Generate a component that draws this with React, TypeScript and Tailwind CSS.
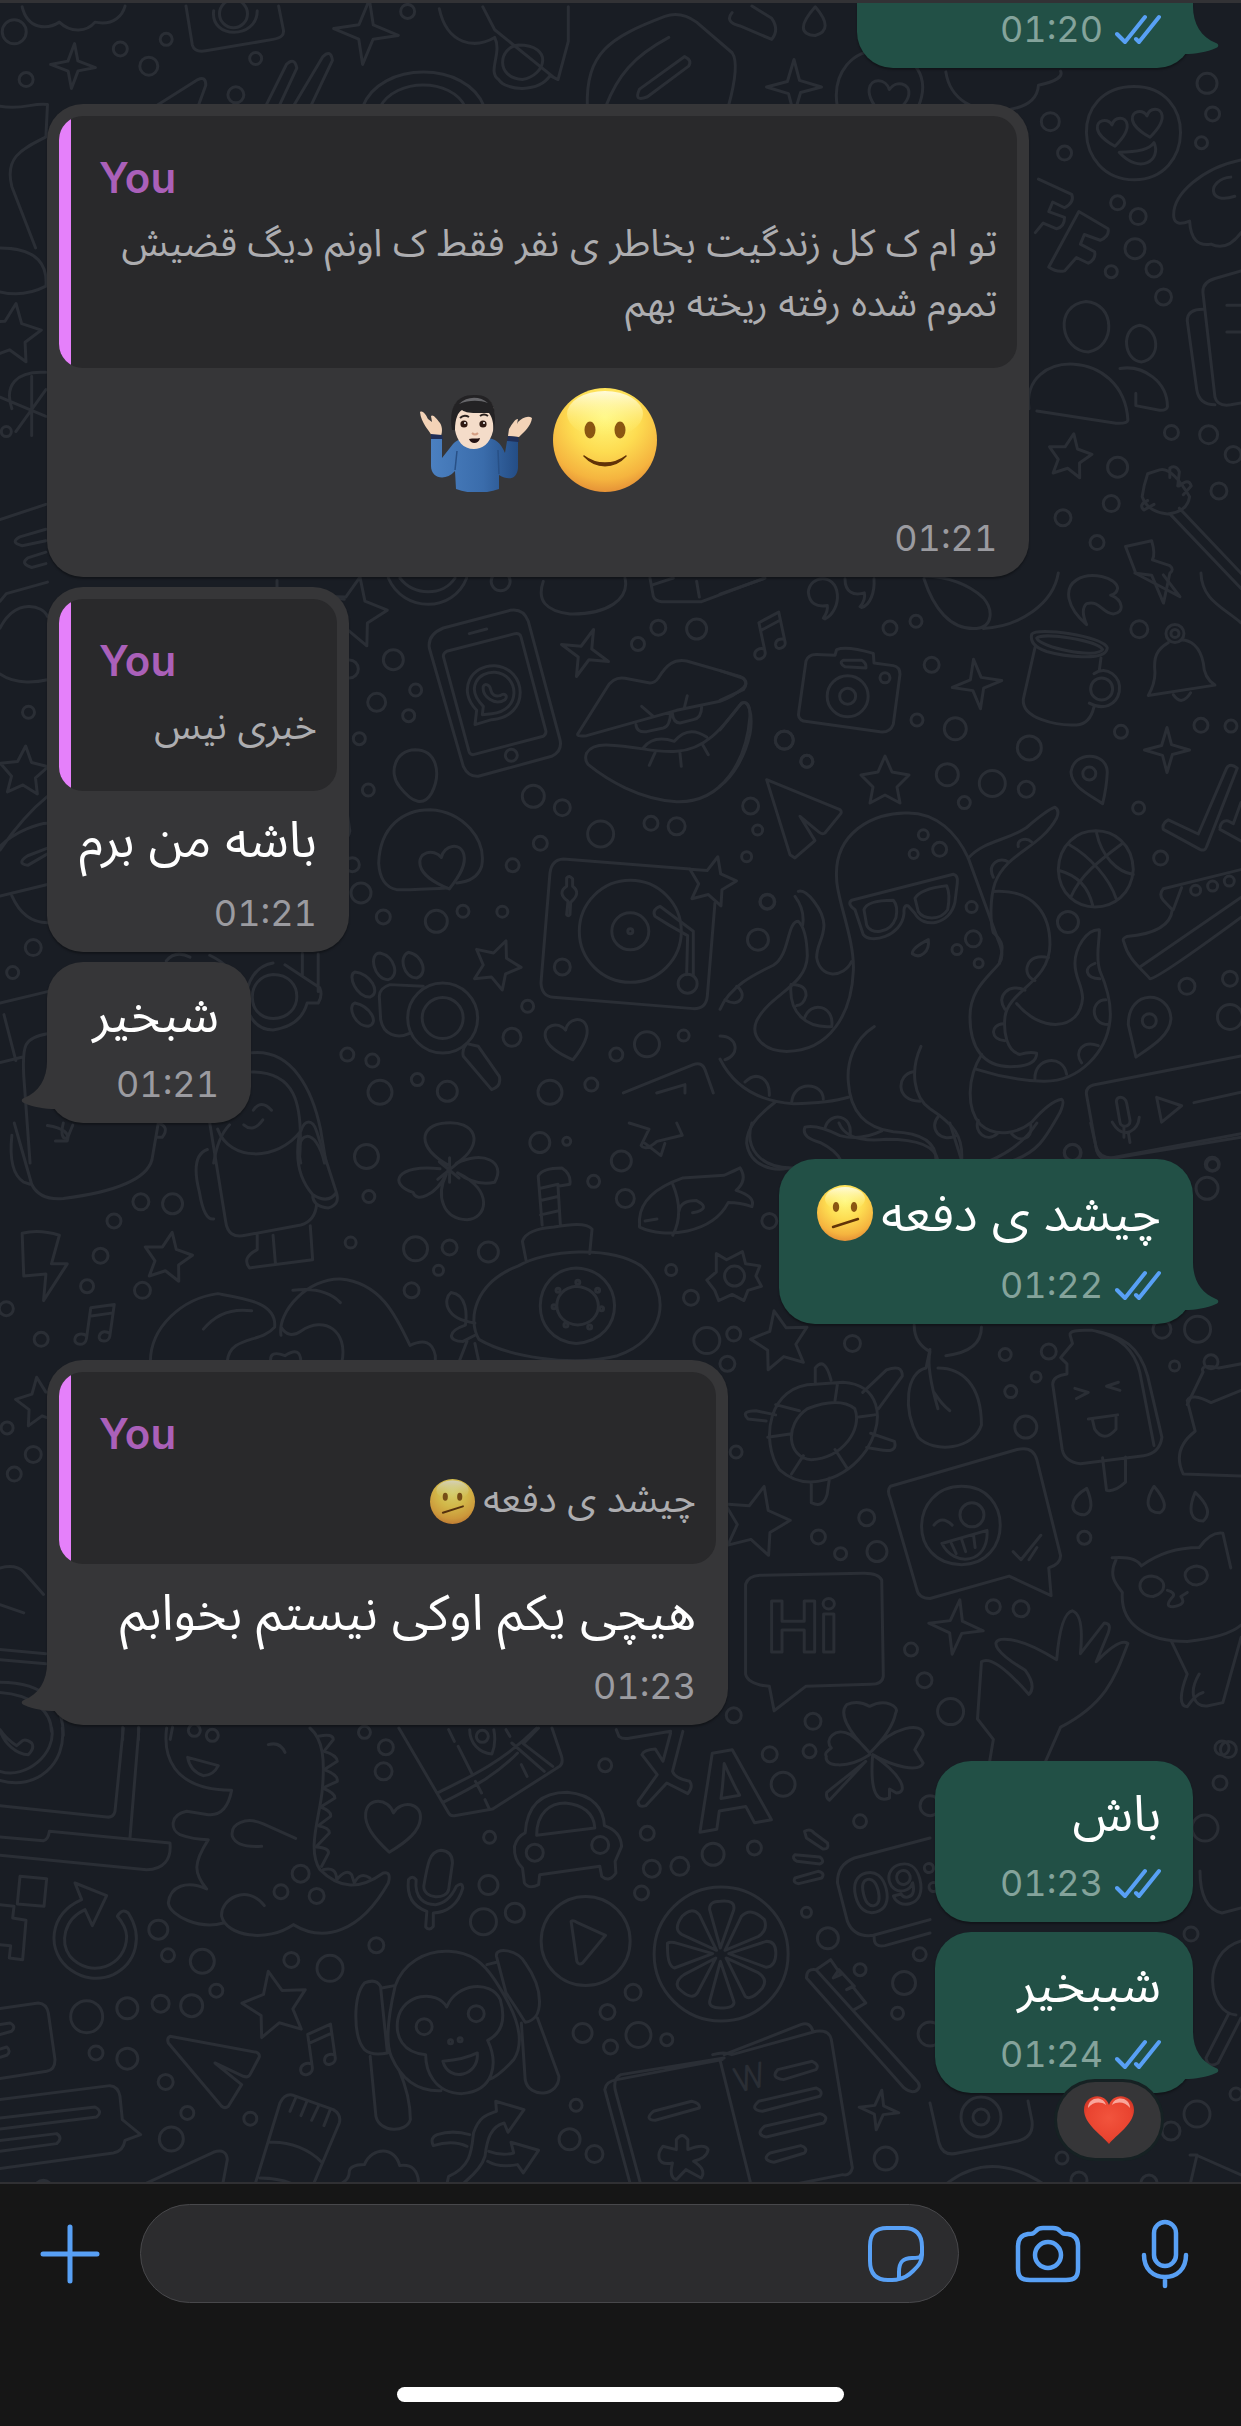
import React, { useState } from 'react';

interface Quote {
  author: string;
  text: string;
  emoji?: boolean;
}

interface Message {
  id: number;
  mine: boolean;
  time: string;
  text?: string;
  emoji?: boolean;
  bigEmoji?: boolean;
  quote?: Quote;
  tail?: boolean;
  reaction?: boolean;
  width: string;
  spacing: string;
}

const messages: Message[] = [
  {
    id: 1,
    mine: false,
    time: '01:21',
    bigEmoji: true,
    quote: {
      author: 'You',
      text: 'تو ام ک کل زندگیت بخاطر ی نفر فقط ک اونم دیگ قضیش تموم شده رفته ریخته بهم',
    },
    width: 'w-6/7',
    spacing: 'mt-9',
  },
  {
    id: 2,
    mine: false,
    time: '01:21',
    text: 'باشه من برم',
    quote: { author: 'You', text: 'خبری نیس' },
    width: 'min-w-[297px]',
    spacing: 'mt-2.5',
  },
  {
    id: 3,
    mine: false,
    time: '01:21',
    text: 'شبخیر',
    tail: true,
    width: 'min-w-[204px]',
    spacing: 'mt-2.5',
  },
  {
    id: 4,
    mine: true,
    time: '01:22',
    text: 'چیشد ی دفعه',
    emoji: true,
    tail: true,
    width: 'min-w-[414px]',
    spacing: 'mt-9',
  },
  {
    id: 5,
    mine: false,
    time: '01:23',
    text: 'هیچی یکم اوکی نیستم بخوابم',
    quote: { author: 'You', text: 'چیشد ی دفعه', emoji: true },
    tail: true,
    width: 'min-w-[681px]',
    spacing: 'mt-9',
  },
  {
    id: 6,
    mine: true,
    time: '01:23',
    text: 'باش',
    width: 'min-w-[258px]',
    spacing: 'mt-9',
  },
  {
    id: 7,
    mine: true,
    time: '01:24',
    text: 'شببخیر',
    tail: true,
    reaction: true,
    width: 'min-w-[258px]',
    spacing: 'mt-2.5',
  },
];

/* ---------- wallpaper ---------- */

type Dot = [number, number, number];
type Stamp = [number, number, number, number];

interface TileProps {
  x: number;
  y: number;
  sx: number;
  sy: number;
  paths: string[];
  dots: Dot[];
}

// paths and dots share the tile's own units, dot radii are in page units
const Tile: React.FC<TileProps> = ({ x, y, sx, sy, paths, dots }) => (
  <g transform={`translate(${x} ${y}) scale(${sx} ${sy})`}>
    {paths.map((d, i) => (
      <path key={i} d={d} />
    ))}
    {dots.map(([cx, cy, r], i) => (
      <ellipse key={i} cx={cx} cy={cy} rx={r / sx} ry={r / sy} />
    ))}
  </g>
);

const STAR = 'M0-24L7-8L24-5L12 7L15 23L0 15L-15 23L-12 7L-24-5L-7-8Z';
const SPARK = 'M0-25L5-6L25 0L6 5L0 25L-5 6L-25 0L-6-5Z';
const HEART = 'M0 24C-16 12-25 2-25-9C-25-24-6-25 0-12C6-25 25-24 25-9C25 2 16 12 0 24Z';
const NOTE =
  'M-9 16V-17L15-24V10M-9-8L15-15M-9 16C-9 24-21 25-21 18C-21 12-14 10-9 13M15 10C15 17 3 18 4 11C5 5 11 5 15 7';

const stars: Stamp[] = [
  [12, 329, 1.2, 8], [1070, 452, 0.9, 10], [24, 767, 1, 4], [353, 607, 1.4, 12],
  [497, 960, 1, 22], [712, 877, 1, 14], [885, 777, 1, 0], [168, 1253, 1, 10],
  [780, 1336, 1.2, -12], [756, 1516, 1.4, 14], [40, 1398, 1, -8], [275, 2000, 1.35, -12],
];
const sparks: Stamp[] = [
  [366, 29, 1.3, 6], [73, 63, 0.9, 4], [794, 84, 1.1, 0], [585, 650, 1, 20],
  [977, 681, 1, -8], [1167, 747, 0.9, 0], [956, 1624, 1.1, 8], [879, 2107, 0.8, 8],
];
const hearts: Stamp[] = [
  [568, 1037, 0.85, -14], [444, 865, 0.9, -14], [392, 1823, 1.1, 6], [888, 96, 0.8, 8],
  [1113, 129, 0.6, -8], [1148, 120, 0.6, -8],
];
const notes: Stamp[] = [
  [770, 633, 0.9, -12], [319, 2047, 1, -8], [97, 1322, 0.95, 8],
];

const Stamps: React.FC<{ d: string; items: Stamp[] }> = ({ d, items }) => (
  <>
    {items.map(([x, y, s, r], i) => (
      <path key={i} d={d} transform={`translate(${x} ${y}) rotate(${r}) scale(${s})`} />
    ))}
  </>
);

const tiles: TileProps[] = [
  {
    x: 0, y: 0, sx: 0.7915, sy: 0.3827,
    paths: [
      'M28 10C35 70 60 70 75 50C90 80 110 75 120 50C145 60 155 30 158 8',
      'M235 8L243 110Q246 130 260 125L345 95Q360 90 358 70L352 8M270 20C265 95 325 95 325 20',
      'M555 15C565 110 600 120 625 90C635 130 615 180 630 200C640 230 680 235 695 190L705 200L718 100V10M610 10L625 70L700 195M655 110C630 115 625 195 660 200C690 190 700 110 655 110Z',
      'M335 272L362 160Q372 140 375 170L352 272M370 272L408 140Q418 120 420 150L392 272M195 272L250 200Q260 190 260 215L250 272',
      'M458 272C480 150 590 150 612 272M480 272C500 195 570 195 588 272',
      'M742 272C740 130 770 90 840 35Q860 20 880 50L925 130Q935 160 920 272M765 272C780 190 800 140 845 90M865 140Q875 150 870 165L818 245Q800 260 808 225Z',
      'M925 25Q915 50 935 60L975 95Q985 70 975 40L950 8M1030 10Q1000 80 1030 85Q1055 70 1030 10Z',
      'M1058 272C1050 180 1080 120 1110 125C1160 130 1175 200 1160 272M1195 180C1200 250 1230 290 1270 280Q1310 270 1312 215Q1345 200 1340 178',
      'M1433 218C1350 218 1355 460 1433 462C1510 460 1512 218 1433 218ZM1414 390Q1450 390 1458 365C1468 410 1440 450 1414 390Z',
      'M1568 410C1520 430 1480 500 1483 560Q1485 585 1503 570Q1505 640 1530 630Q1550 650 1568 600M1555 455C1525 460 1525 530 1560 505',
      'M1312 460L1354 500Q1358 520 1345 535L1330 520L1325 545L1345 560Q1345 585 1335 590L1318 575L1308 600',
      'M1363 545L1400 590Q1402 610 1390 620L1370 605L1365 630L1383 650Q1385 670 1375 680L1360 665L1345 700Q1335 705 1325 690Z',
      'M1372 780C1330 790 1340 910 1375 912C1410 900 1410 785 1372 780ZM1440 842C1415 850 1420 935 1442 938C1468 930 1465 850 1440 842ZM1300 1060C1290 900 1420 900 1425 1090Q1424 1100 1410 1098L1310 1066M1415 955C1445 945 1475 990 1475 1055Q1474 1065 1465 1064L1435 1052V1020',
      'M1568 700L1535 720Q1518 730 1520 760L1535 1030Q1538 1055 1555 1050L1568 1045M1520 800Q1500 800 1500 830L1512 1010Q1515 1050 1535 1050M1550 790H1568M1550 860H1568',
      'M1450 1230Q1445 1260 1443 1290Q1450 1330 1475 1335Q1500 1330 1503 1290Q1480 1210 1465 1220ZM1490 1320L1568 1490M1478 1335L1568 1530M1478 1240V1215Q1486 1205 1490 1225L1488 1262M1490 1262Q1502 1240 1505 1262L1495 1285M1450 1300Q1438 1310 1445 1325L1458 1310',
      'M1422 1420L1455 1405Q1460 1440 1456 1455L1478 1470Q1484 1480 1478 1490L1470 1568L1455 1495L1435 1490Z',
      'M0 270C30 280 40 260 60 265L58 350C30 380 5 400 15 480L45 640M0 640C50 640 60 690 58 740Q30 770 0 755',
      'M15 1060C5 1000 20 960 58 965M40 975V1130M0 1030L58 1080M58 1010L20 1120',
      'M0 1350L58 1310M58 1375L25 1395Q12 1410 28 1418L58 1405M58 1435L35 1450Q25 1465 40 1475L58 1465',
    ],
    dots: [
      [18, 75, 12], [33, 200, 7], [152, 120, 7], [188, 165, 9], [210, 95, 6], [298, 240, 8],
      [323, 145, 6], [515, 22, 7], [295, 28, 14], [1327, 310, 9], [1345, 392, 7], [1525, 210, 10],
      [1532, 290, 7], [1518, 365, 6], [1412, 522, 7], [1438, 558, 8], [1434, 642, 10], [1404, 702, 6],
      [1458, 695, 8], [1470, 768, 8], [1480, 1122, 7], [1527, 1128, 9], [1412, 1213, 10],
      [1404, 1308, 8], [1343, 1345, 8], [1540, 1275, 8], [1386, 1410, 7], [1558, 1180, 8], [8, 1120, 5],
    ],
  },
  {
    x: 0, y: 560, sx: 0.7915, sy: 0.3827,
    paths: [
      'M0 100L8 80L60 50M350 45V70L435 95M0 170C20 90 55 110 60 140M0 290C20 320 50 310 60 305',
      'M0 750Q30 660 60 610M0 870L60 840M0 740C20 700 50 680 60 680M60 760L35 790Q20 785 35 765L60 745M15 870Q30 940 60 940M435 600L442 700Q440 720 435 722',
      'M210 1040Q222 1010 240 1030M265 1025Q300 1060 295 1110M345 1045C300 1060 300 1220 345 1220Q380 1210 388 1150L402 1150Q408 1130 404 1110L360 1050M345 1075C310 1080 310 1190 345 1190C385 1190 385 1075 345 1075ZM402 1022V1120M382 1020V1080',
      'M0 1150L60 1120M5 1180L20 1300M60 1230C30 1240 28 1260 30 1340L38 1568M0 1305L30 1290',
      'M318 1280C370 1270 395 1380 405 1480L412 1568M318 1330C370 1330 385 1400 378 1568M270 1568Q275 1500 290 1468M320 1430Q330 1400 343 1430M308 1468Q320 1490 332 1455',
      'M380 1568C370 1480 400 1470 410 1568M60 1470Q90 1480 85 1510H70',
    ],
    dots: [[36, 390, 6], [42, 1005, 8], [16, 1070, 6]],
  },
  {
    x: 340, y: 570, sx: 0.3333, sy: 0.3333,
    paths: [
      'M145 15C190 120 340 120 380 15M180 15C220 70 310 70 345 15M610 25Q580 110 690 123C800 125 870 80 855 15M930 15L940 70Q945 85 965 86H1085L1275 15M1070 25L1078 72M940 35L1000 15',
      'M310 165L510 112Q550 105 565 145L660 500Q668 535 635 550L415 610Q385 612 370 580L268 225Q262 185 310 165ZM320 235L525 182Q540 180 543 192L618 475Q618 485 610 490L400 545Q390 545 387 535L310 250Q310 240 320 235ZM388 182L440 168',
      'M405 455L410 412C350 350 395 275 465 278C560 285 575 430 455 440ZM427 425L430 400C375 345 415 295 465 298C540 305 545 415 455 422ZM430 340C425 370 465 400 495 380C505 370 495 358 480 368C465 372 455 365 452 350C450 335 435 330 430 340Z',
      'M715 480L800 345Q820 310 855 316L930 330Q945 330 955 315C980 275 1000 258 1040 264L1200 310Q1230 325 1210 345Q1180 370 1140 385L1010 412L740 488Q705 492 715 480ZM905 400L940 430M1042 368L1033 405M888 455Q890 480 920 476L970 465Q990 460 992 420M997 420Q1000 450 1020 450L1060 440Q1085 435 1085 402',
      'M740 540Q755 515 800 516C900 520 940 540 1010 535C1100 530 1150 460 1205 390Q1230 380 1230 430C1220 560 1150 690 1010 686C900 680 800 620 745 575Q732 560 740 540ZM910 525Q940 485 1003 505Q1045 455 1100 492M945 540L928 577M1020 540L1024 580M1088 515L1105 545',
      'M225 530C165 532 145 600 178 640Q240 720 275 660C305 600 290 530 225 530ZM320 945Q200 952 170 950Q120 940 116 870C120 760 190 710 270 710C370 715 440 800 425 880Q410 925 350 930',
      'M1280 620L1500 710Q1508 718 1500 725L1455 780Q1445 785 1438 778L1380 730L1425 803L1365 855L1350 845Z',
      'M1050 888L670 858Q635 860 630 900L603 1230Q605 1270 640 1273L1060 1307Q1098 1308 1102 1270L1125 990M680 1025L684 985Q650 960 680 940V915Q688 905 698 918V940Q725 960 692 988L690 1025Q685 1032 680 1025ZM985 1055L945 1030Q935 1010 960 1000L1060 1075V1205M985 1055L1043 1088L1040 1205',
      'M120 1140C85 1140 100 1220 145 1220C180 1210 165 1150 120 1140ZM205 1138C175 1150 190 1215 230 1215C265 1205 250 1145 205 1138ZM45 1197C20 1205 50 1275 90 1272C125 1260 90 1200 45 1197ZM45 1290C20 1300 45 1360 85 1360C120 1350 90 1300 45 1290ZM250 1240L150 1235Q118 1245 118 1270L122 1340C130 1385 170 1400 213 1380M380 1412L415 1420L478 1510Q485 1540 455 1550L370 1450Q365 1430 380 1412Z',
      'M850 1560L1060 1475Q1085 1465 1095 1490L1120 1560M950 1560L1035 1535V1560',
    ],
    dots: [
      [482, 25, 9.5], [160, 260, 10], [110, 388, 9], [227, 351, 6], [206, 428, 6], [58, 497, 6],
      [28, 288, 9], [514, 547, 6], [85, 651, 6], [580, 670, 11], [667, 704, 8], [782, 783, 13],
      [601, 811, 7], [518, 877, 6.5], [37, 875, 7], [63, 960, 10], [130, 1032, 7], [289, 1045, 11],
      [369, 1015, 6], [487, 1016, 5.5], [933, 751, 7], [1010, 760, 8.5], [955, 164, 7.5],
      [1070, 168, 10], [894, 213, 6.5], [1333, 501, 9], [1401, 565, 6], [1232, 699, 8],
      [1253, 771, 5], [1220, 851, 5], [1282, 986, 7], [1254, 1100, 10.5], [871, 1075, 51],
      [871, 1075, 18.5], [871, 1075, 2.5], [667, 1182, 8], [1043, 1232, 9.5], [308, 1335, 35],
      [308, 1335, 20.5], [563, 1300, 6], [516, 1393, 9], [829, 1445, 6.5], [921, 1414, 12.5],
      [1031, 1388, 5.5], [22, 1445, 6.5], [97, 1463, 6.5], [232, 1520, 6], [754, 1535, 6.5],
      [120, 1558, 12], [322, 1555, 10], [630, 1558, 12],
    ],
  },
  {
    x: 720, y: 570, sx: 0.3333, sy: 0.3827,
    paths: [
      'M315 120C340 110 355 80 352 55C345 0 270 5 265 50C268 80 290 90 322 85Q325 100 310 118ZM425 90C450 85 465 50 462 15M375 15C375 50 400 60 433 52Q438 70 420 88',
      'M0 55L130 15M612 15C640 90 690 150 770 145C820 140 820 95 790 65C740 25 680 10 612 8M790 145C900 140 1000 80 1015 0M1100 135C1040 90 1030 40 1070 18C1110 -5 1190 10 1193 40Q1190 55 1172 58C1210 70 1215 105 1180 107C1145 105 1140 70 1100 80Q1080 95 1100 135ZM1245 0L1380 62L1330 5M1443 0C1445 70 1510 90 1563 130',
      'M345 215L350 200Q380 190 460 210L462 235L520 242Q540 245 540 265L520 395Q510 418 480 415L250 387Q232 380 236 365L258 230Q265 212 290 213ZM370 228H425Q440 235 438 248L375 245Q355 235 370 228Z',
      'M935 160C950 140 1150 165 1162 195C1160 235 1020 215 980 205C945 195 930 180 935 160ZM950 170C970 155 1130 175 1148 200C1130 225 960 195 950 170ZM945 195L910 330C905 380 1010 400 1070 397Q1110 395 1122 350M1143 222L1138 255M1122 263C1160 240 1205 270 1198 310C1190 345 1150 360 1108 340',
      'M1345 182C1310 200 1300 220 1305 260Q1305 290 1285 320L1485 293Q1452 275 1450 235C1440 190 1410 175 1385 175M1360 318Q1385 350 1412 313',
      'M1148 603C1110 580 1055 560 1053 520C1060 465 1160 465 1162 520Q1160 560 1148 603ZM1330 670Q1325 655 1345 645L1435 682L1520 510Q1530 495 1552 510L1460 715Q1455 728 1440 722ZM1500 665Q1505 645 1525 648L1540 655L1563 600M1500 670L1563 700',
      'M0 255L70 275Q85 290 70 305L0 333M0 410L60 345C85 320 100 370 90 420C75 480 40 530 0 557',
      'M1015 775C1020 640 1235 640 1240 775C1230 905 1020 905 1015 775ZM1130 680C1145 740 1190 780 1240 788M1048 710C1110 740 1170 800 1188 850M1205 708C1140 750 1080 790 1052 848M1020 778C1070 790 1105 820 1118 868',
      'M1563 775L1330 825Q1315 840 1330 855L1357 880Q1350 940 1220 950Q1205 955 1212 965C1225 1010 1260 1030 1290 1060Q1310 1062 1563 900M1262 1028L1563 848M1385 822L1360 880',
      'M1248 1265L1225 1180C1225 1085 1350 1090 1353 1165C1350 1210 1290 1240 1248 1265ZM1563 1262L1120 1338Q1095 1345 1100 1365L1130 1510Q1140 1535 1165 1530L1563 1465M1190 1385C1185 1365 1215 1365 1220 1385L1230 1430C1232 1450 1202 1450 1200 1435ZM1177 1435Q1200 1470 1230 1460Q1255 1450 1258 1422M1225 1462L1230 1488M1310 1370L1385 1392L1325 1435ZM1422 1384L1563 1357',
      'M350 800C340 680 460 625 560 627C650 625 710 680 745 745L835 960Q855 1000 838 1020C800 1060 750 1090 750 1160C750 1240 790 1290 870 1290C920 1290 950 1280 950 1255Q930 1250 900 1258C860 1250 850 1200 855 1160C865 1090 990 1070 990 970C990 900 950 825 820 832M350 800C350 850 405 960 400 1040C395 1150 330 1250 200 1250C130 1250 90 1210 110 1170C150 1100 260 1080 262 1000Q260 930 235 910C200 910 210 1000 160 1025C100 1050 30 1080 0 1140',
      'M235 832C260 825 310 880 312 920C310 960 290 970 290 1005C300 1060 370 1060 395 1015M225 845Q255 880 248 920M745 745C790 700 860 700 920 665Q980 620 1005 612Q1020 620 1010 640C960 720 860 730 825 810C810 850 810 910 820 940C860 970 845 990 838 1020',
      'M890 1125C960 1200 1080 1200 1088 1110C1085 1070 1065 1060 1065 1020C1065 980 1100 930 1138 932C1140 960 1125 1000 1140 1040C1165 1090 1175 1130 1170 1170C1160 1250 1080 1330 970 1328Q870 1325 770 1297M785 1258C740 1320 740 1400 780 1440C830 1480 900 1460 935 1435Q990 1380 1025 1375Q1035 1380 1020 1410C980 1470 960 1510 880 1535',
      'M463 1185C400 1220 380 1280 385 1330C390 1400 430 1450 520 1460Q650 1465 648 1535M603 1237C570 1300 580 1370 630 1400C700 1440 730 1470 725 1535M0 1270C40 1340 110 1380 220 1387Q330 1385 385 1370M165 1383C110 1420 80 1450 80 1490C90 1550 160 1565 205 1555M485 1458Q420 1485 360 1470Q290 1440 255 1448C245 1470 270 1480 300 1488Q350 1510 362 1535',
      'M213 1075C205 1150 260 1190 335 1185C345 1130 270 1115 253 1165M215 1075Q260 1075 258 1105Q250 1130 230 1130M50 1080C85 1100 60 1140 15 1115M0 1210C55 1210 60 1260 15 1272M75 1330C110 1300 150 1320 148 1365M215 1383C220 1325 310 1330 310 1375M315 1450C330 1405 400 1415 390 1470M580 1303C530 1310 525 1380 600 1380M655 1420C625 1450 660 1490 710 1470',
      'M820 795C800 760 840 740 865 755M895 715C890 695 920 690 935 703M985 1005C920 990 900 1050 945 1065M915 1090C870 1070 825 1105 855 1140M850 1178C810 1180 810 1220 855 1222M1125 1020C1090 1030 1095 1060 1140 1060M1158 1115C1110 1115 1110 1180 1165 1180M1135 1235C1090 1220 1060 1250 1085 1280M945 1325C940 1265 1030 1255 1040 1310M775 1430C760 1460 800 1490 832 1465M875 1465C900 1490 940 1480 932 1440',
      'M395 855L700 787Q715 790 712 810L705 860C690 920 610 930 585 890L565 870Q550 865 552 890C545 950 450 970 430 945L405 880Q380 865 395 855ZM432 880Q440 855 520 855Q535 870 528 900C510 945 450 945 440 920ZM585 850Q600 825 680 817Q692 840 683 880C660 910 610 905 595 885ZM625 958Q575 980 577 995C600 1010 630 990 625 958Z',
    ],
    dots: [
      [510, 144, 7], [588, 126, 6], [635, 240, 7.5], [591, 384, 6], [706, 407, 11], [193, 437, 9],
      [260, 492, 6], [928, 457, 12], [682, 527, 11], [817, 550, 13], [919, 565, 8], [733, 600, 6],
      [383, 322, 20.5], [383, 322, 8], [495, 274, 5], [1145, 303, 11], [1258, 147, 8.5], [1365, 158, 9],
      [1365, 158, 4], [1203, 415, 6.5], [1443, 398, 7], [1533, 400, 6], [1108, 524, 6.5], [1256, 614, 6],
      [1322, 745, 7], [610, 684, 5], [659, 722, 7], [581, 734, 4.5], [755, 873, 5.5], [760, 956, 8],
      [711, 984, 5], [776, 1020, 4.5], [1044, 912, 10.5], [142, 859, 7.5], [1427, 829, 5], [1478, 818, 5],
      [1528, 805, 5], [1401, 1080, 8], [1530, 1060, 7.5], [1530, 1160, 12.5], [1288, 1170, 7],
      [1058, 1515, 8.5], [1477, 1545, 7],
    ],
  },
  {
    x: 0, y: 1120, sx: 0.7915, sy: 0.4082,
    paths: [
      'M18 0L40 150Q50 190 80 185C140 170 185 140 192 90L200 0M15 30Q10 120 30 145L38 150M80 0Q75 40 85 38L92 5M200 0Q215 10 205 35L198 35',
      'M265 0L285 240Q288 285 310 275L380 250Q398 240 400 200M275 15C290 95 350 95 380 20C385 -10 395 -10 400 20L425 170Q415 200 395 175Q370 120 378 30M262 65Q240 80 252 170Q258 240 270 235M395 175Q395 205 415 208Q430 200 425 170M325 275L325 310Q305 330 315 355L395 335L392 252M345 275L348 345',
      'M568 105C525 60 530 5 562 0C600 -8 615 50 576 100C610 65 640 95 625 145Q600 155 578 122C625 165 615 235 590 237C560 235 550 180 564 125C550 180 525 195 522 170C490 150 500 100 556 112M555 95L580 135M582 92L553 138M568 85V145',
      'M28 270Q50 260 75 275L65 345H85L55 435L58 370L30 375Z',
      'M190 585C190 500 230 430 275 418C310 430 350 440 347 500C330 540 290 520 287 585M257 505Q280 450 318 460M355 520C350 460 390 380 430 382C480 390 500 470 518 545Q545 520 550 570V585M370 410Q410 400 430 440M355 500Q365 530 380 510C410 470 440 510 432 585M342 585Q340 555 360 570Q380 545 380 585',
      'M665 340L660 290Q665 260 700 255Q740 240 748 260L745 320M685 250L680 130Q685 110 710 110Q722 125 720 150L705 155L708 250M683 160L705 150M683 190L705 180M683 225L706 215M655 350C690 310 770 300 810 350C850 420 840 530 780 570C720 600 640 570 605 530C590 480 600 390 655 350ZM600 490C560 480 560 430 570 415C590 420 590 470 588 495C565 510 565 535 585 535L600 520M590 535L580 585M600 540L605 585',
      'M728 355C670 360 665 530 728 540C795 530 790 360 728 355ZM728 400C695 405 695 490 730 495C765 490 765 405 728 400Z',
      'M808 235C810 180 840 150 862 135L915 128Q930 115 935 110Q945 140 930 165Q955 180 950 205Q935 195 920 195C900 270 840 285 808 255ZM850 275Q865 220 850 150M858 215Q860 190 880 190Q900 210 875 220M815 240L830 235',
      'M905 320L918 335L938 315L942 345L960 350L955 375L962 400L945 410L940 435L925 420L908 435L903 410L893 385L905 365Z',
      'M795 0L820 15L810 55Q815 70 830 45L862 30L855 0M815 50L835 80L840 50M950 0C940 60 960 110 1000 110L1040 100M1060 0Q1070 50 1120 40Q1180 40 1185 92M1200 0L1215 92M1310 0Q1290 60 1250 93M1378 0L1385 60Q1390 90 1410 85L1568 35M1420 10V35',
      'M1155 495Q1155 540 1175 560Q1170 600 1185 700M1240 500Q1240 560 1195 570M1175 555L1170 600C1145 610 1140 700 1160 770C1180 810 1230 800 1240 740C1240 640 1215 600 1185 600M1180 660Q1190 690 1200 705',
      'M1355 540L1352 520Q1350 505 1380 508C1420 520 1440 550 1450 620L1468 770Q1465 810 1445 815L1365 835Q1345 830 1342 800L1330 640Q1330 620 1348 615V590L1340 575ZM1385 510Q1430 530 1440 610L1458 790M1393 820L1398 900Q1408 905 1422 880V818M1358 650L1375 660L1360 675M1413 635L1398 645L1415 655M1375 725L1412 715M1380 725L1383 750Q1395 785 1410 750V720',
      'M1030 640C970 640 960 780 985 850C1020 910 1070 870 1095 800C1120 720 1110 640 1065 635ZM1020 700C990 740 995 820 1025 825C1065 820 1090 750 1080 700Q1060 670 1020 700ZM1030 640V600Q1042 570 1050 630M1090 660L1120 605Q1140 590 1140 620L1110 700M968 730L945 725Q935 705 955 705L980 715M1100 760L1130 780Q1135 810 1110 800L1095 795M1025 880V930Q1040 945 1045 910L1048 870M1058 640L1055 680M1105 715L1085 720M1070 845L1055 800M1000 860L1015 815M970 770L998 762M980 690L1010 705',
      'M1125 890L1285 800Q1305 790 1310 825L1340 1060Q1340 1080 1325 1090L1328 1158L1275 1110L1175 1165Q1160 1165 1158 1140L1125 920Q1120 900 1125 890ZM1215 890C1150 890 1145 1080 1215 1082C1280 1080 1280 890 1215 890ZM1190 1030L1247 998C1250 1080 1205 1090 1190 1030ZM1202 1030L1208 1055M1215 1020L1220 1050M1230 1010L1232 1040M1180 985Q1190 960 1203 985M1280 1050L1290 1070L1315 1010M1300 1070L1310 1040',
      'M1373 895C1350 920 1350 960 1370 960Q1385 950 1373 895ZM1458 890C1445 930 1450 955 1465 955Q1480 940 1458 890ZM1510 905C1500 950 1505 975 1520 975Q1535 950 1510 905ZM1568 655L1530 685Q1505 660 1500 680L1510 755Q1480 800 1495 860L1568 865',
      'M1405 1065Q1435 1060 1442 1085C1470 1045 1500 1040 1515 1040Q1530 1000 1545 1005L1555 1090M1410 1070C1400 1110 1410 1130 1418 1150C1415 1230 1450 1270 1500 1270Q1550 1260 1568 1230M1475 1145Q1485 1150 1482 1160Q1470 1185 1482 1185Q1500 1180 1492 1160L1500 1150M1480 1270L1500 1350C1490 1400 1490 1430 1500 1430Q1510 1400 1520 1395M1515 1350C1500 1400 1510 1430 1525 1428L1545 1420L1568 1260M1455 1110C1435 1110 1435 1160 1457 1160C1475 1150 1475 1115 1455 1110ZM1512 1085C1490 1090 1495 1130 1512 1132C1530 1125 1530 1090 1512 1085Z',
      'M960 1108L1090 1103Q1110 1102 1114 1120L1116 1355Q1115 1375 1100 1375L1018 1380L978 1440L972 1380Q945 1375 942 1350V1130Q945 1110 960 1108Z',
      'M1235 1460L1240 1320Q1255 1300 1300 1400Q1310 1380 1295 1340C1260 1300 1250 1270 1265 1265Q1290 1260 1335 1315Q1340 1200 1355 1195Q1370 1205 1365 1300L1395 1225Q1405 1225 1400 1250L1385 1320Q1415 1260 1425 1275C1410 1350 1400 1420 1340 1480L1320 1568M1235 1460L1255 1510L1250 1568',
      'M0 1370C60 1370 80 1430 80 1500M0 1395C40 1400 65 1440 65 1490M0 1290L58 1300M0 1315L58 1325M0 1090Q20 1080 30 1100L55 1155M0 1180L30 1200M155 1480V1510M175 1480V1510M215 1510L218 1480',
      'M1568 590L1540 600Q1515 590 1520 610L1500 690',
    ],
    dots: [
      [178, 193, 8], [218, 198, 10], [144, 240, 7], [127, 325, 7.5], [110, 400, 6.5], [180, 410, 8],
      [463, 82, 12], [466, 180, 6], [682, 48, 10], [716, 45, 4], [785, 93, 10], [790, 185, 9],
      [750, 143, 6], [443, 293, 5.5], [525, 308, 12], [568, 305, 7.5], [617, 316, 10], [554, 361, 5],
      [520, 410, 7.5], [52, 530, 7], [8, 455, 7], [972, 240, 7.5], [848, 360, 5.5], [873, 428, 7.5],
      [893, 533, 13], [927, 517, 7], [919, 590, 7.5], [1077, 540, 8], [1270, 567, 6], [1325, 560, 7.5],
      [1309, 622, 5], [1277, 658, 6], [1296, 745, 11], [930, 806, 6], [1484, 595, 5], [1530, 585, 7],
      [1513, 505, 13], [1468, 505, 9], [1532, 102, 6], [1525, 160, 11], [1355, 72, 8], [928, 375, 10],
      [1095, 967, 8], [1034, 1014, 7], [1062, 1055, 6], [1108, 1050, 10], [1370, 1016, 6.5],
      [1228, 960, 12], [1255, 1185, 7], [1290, 1190, 8], [1151, 1290, 6.5], [1168, 1365, 7.5],
      [1201, 1442, 13], [18, 860, 7], [9, 747, 6],
      [42, 812, 8], [730, 390, 2], [705, 410, 2], [755, 410, 2], [700, 450, 2], [760, 455, 2],
      [715, 495, 2], [745, 500, 2], [1552, 1535, 8],
    ],
  },
  {
    x: 330, y: 1700, sx: 0.3827, sy: 0.3333,
    paths: [
      'M180 75L310 330Q315 340 325 338L425 318L600 190Q610 180 605 160L580 75M280 270C350 230 450 180 540 75M295 298C380 250 440 210 490 150M475 120L560 205M545 75L505 122L582 190M310 80L325 115M335 130L370 210M380 235L396 270M405 290L415 315M460 80L470 100M500 185L515 220M365 80C365 120 390 150 423 153Q435 120 428 80',
      'M748 80L755 100Q765 110 785 105L890 85M922 85L895 205Q900 225 940 235Q950 250 935 272L880 240L825 308Q805 315 805 295L855 215L815 155Q820 140 850 138L870 175L890 90',
      'M1410 150C1350 80 1330 30 1350 5Q1380 -10 1410 10C1450 -15 1490 10 1478 30Q1470 80 1415 145C1470 70 1550 55 1550 95L1528 140L1550 180C1540 210 1470 190 1418 155C1500 220 1510 270 1480 270L1462 258V285C1430 300 1410 270 1418 155M1410 155C1350 200 1290 190 1297 160Q1290 150 1310 135C1290 110 1320 70 1360 95Q1390 120 1410 150M1400 175L1305 292Q1295 285 1298 268Z',
      'M510 390C515 300 560 268 620 268C690 275 715 320 717 368Q760 385 762 430L745 475L747 510Q730 540 710 520L705 490L548 515L545 545Q520 560 508 540L503 495Q480 470 482 430Q490 400 510 390ZM540 397C540 330 575 300 615 300C660 305 690 330 692 375Z',
      'M290 442C260 445 255 480 245 550C245 590 305 590 310 560L320 480Q320 445 290 442ZM205 530Q215 515 225 530C220 590 250 605 275 605Q310 600 330 550Q345 535 347 555C335 605 305 628 270 630L270 670Q260 685 250 672L253 625C215 610 200 580 205 530Z',
      'M630 655Q635 650 645 658L720 697L660 780Q650 788 645 775ZM1020 735L992 620Q990 595 1020 595Q1060 590 1055 620ZM1020 775L992 895Q990 915 1020 915Q1060 915 1055 895ZM1000 752L900 795Q880 790 882 720Q890 715 910 722ZM1042 752L1140 715Q1165 715 1165 750Q1165 790 1140 793ZM1010 742L920 695Q895 680 920 640Q945 610 965 635ZM1032 742L1075 640Q1100 610 1135 650Q1145 680 1120 700ZM1008 765L960 870Q945 895 910 855Q900 835 925 815ZM1035 765L1120 810Q1145 830 1130 855Q1100 895 1085 880Z',
      'M1568 405L1370 465Q1325 485 1326 540L1352 655Q1370 705 1420 697L1568 650M1422 700Q1420 735 1450 728L1568 690M1240 385Q1255 375 1265 390L1300 420Q1305 440 1288 438L1245 405ZM1215 455L1280 462Q1295 475 1280 483L1220 475Q1205 465 1215 455ZM1215 525L1275 505Q1295 510 1285 525L1225 542Q1208 540 1215 525Z',
      'M1245 825Q1245 795 1270 800L1530 1130Q1550 1150 1530 1165Q1515 1170 1500 1155ZM1270 800L1308 770L1335 815L1315 825L1330 800L1370 850L1350 860L1365 850L1400 900L1370 920',
      'M170 850C190 780 250 742 310 745C370 748 400 780 430 830C470 900 520 1000 480 1070Q440 1120 415 1130M170 850C150 950 145 1020 160 1060C190 1140 240 1165 290 1163M250 1055C190 1050 170 1000 177 950C190 870 280 860 305 912C330 840 420 830 445 890C460 950 450 990 412 1012C440 1080 430 1165 345 1172C270 1170 250 1100 250 1055ZM295 1075Q350 1070 385 1050C390 1120 310 1140 295 1075ZM132 850Q120 825 90 840C60 880 60 1000 90 1040Q110 1060 150 1050ZM135 855L168 848M105 1060L120 1240C130 1290 200 1290 210 1250Q210 1180 180 1100M410 785L435 778M435 760C430 730 490 740 510 780C560 860 560 950 510 958Q490 920 460 870ZM500 960L510 1130C520 1190 600 1180 598 1120L542 945',
      'M1025 1070L750 1130Q720 1135 718 1160L785 1445M1030 1065L760 1115Q740 1125 745 1160L812 1445M1020 1075L1100 1445M1000 1055Q1030 1045 1050 1055L1270 985Q1305 980 1310 1010L1365 1395Q1360 1420 1340 1415L1210 1445M1030 1055L1230 965Q1255 955 1262 985M845 1225L945 1195Q968 1200 965 1215L850 1252Q820 1250 845 1225ZM1170 1100L1260 1075Q1280 1085 1270 1100L1185 1130Q1150 1125 1170 1100ZM1120 1195L1270 1155Q1290 1165 1280 1180L1130 1225Q1095 1220 1120 1195ZM1135 1270L1280 1232Q1305 1240 1290 1260L1140 1302Q1110 1295 1135 1270ZM1150 1350L1230 1328Q1250 1335 1240 1350L1160 1378Q1125 1370 1150 1350Z',
      'M905 1340L905 1310Q920 1285 935 1310V1340Q980 1320 988 1340Q985 1365 950 1375Q985 1400 970 1425L930 1400L905 1430Q885 1425 895 1380C850 1390 855 1350 870 1330Z',
      'M365 1295Q320 1280 280 1295Q260 1305 270 1328Q320 1310 358 1330M305 1445L310 1420C370 1390 370 1340 375 1290C390 1240 410 1235 435 1225L433 1195L507 1220L465 1288L455 1260C420 1270 410 1310 405 1360C395 1400 360 1430 345 1445M415 1345Q450 1360 480 1350L473 1318L545 1342L505 1410L490 1385Q440 1395 412 1375M25 1445Q50 1430 50 1410Q50 1385 90 1385C110 1330 170 1330 182 1388Q230 1380 232 1445',
    ],
    dots: [
      [90, 88, 6], [146, 133, 7.5], [140, 205, 8.5], [719, 187, 6.5], [417, 403, 6], [414, 546, 9.5],
      [401, 656, 13], [483, 629, 9.5], [121, 727, 7.5], [0, 796, 13], [1055, 37, 7.5], [1262, 55, 8],
      [1149, 154, 7.5], [1184, 244, 12], [1253, 145, 6.5], [1385, 355, 6.5], [829, 391, 7],
      [841, 497, 8.5], [914, 490, 9], [1001, 454, 11], [1109, 435, 7], [814, 570, 7], [1245, 628, 5],
      [1301, 706, 10.5], [1385, 800, 6], [1500, 840, 11.5], [1541, 754, 6.5], [1483, 931, 6],
      [535, 449, 8.5], [706, 426, 8.5], [668, 714, 44.5], [1022, 753, 67], [792, 868, 8], [725, 927, 7.5],
      [660, 990, 9.5], [806, 996, 12.5], [733, 1032, 7], [880, 1010, 6], [643, 1207, 6], [626, 1309, 10.5],
      [691, 1353, 8.5], [1452, 1367, 11.5], [246, 971, 8], [382, 932, 8], [315, 1016, 2], [340, 1010, 2],
      [398, 100, 6], [1568, 993, 12], [1568, 308, 10],
    ],
  },
  {
    x: 0, y: 1720, sx: 0.3333, sy: 0.3333,
    paths: [
      'M0 145C80 170 170 90 155 15M0 172C110 205 200 120 187 15M0 20C10 60 50 95 85 95Q105 75 95 60Q75 45 65 55L50 68Q20 50 0 20',
      'M370 15L345 265Q340 285 320 282L0 248M417 15L390 345M0 342L130 353Q145 350 148 325L510 360C515 410 490 440 440 440L0 397',
      'M60 460L140 467L132 550L52 543ZM0 545L42 550L38 585L78 592L68 710L28 705L32 668L0 665',
      'M500 15C490 90 510 200 695 202Q680 280 625 275L560 265C510 275 510 320 540 335Q580 350 625 350C580 420 580 450 620 498C560 470 510 490 505 540C510 580 600 620 670 600M793 548C740 480 660 530 665 580C680 640 800 660 880 605C970 660 1080 630 1165 480Q1175 445 1150 450C1080 500 1020 500 960 440C920 380 960 280 967 200C975 110 970 50 930 15M563 103L655 128Q640 158 610 158Q570 145 563 103ZM805 65Q840 55 855 88M887 346L790 303C740 280 690 300 697 340Q710 375 785 370',
      'M955 40Q1000 30 1000 50L972 85Q1010 95 1012 115L972 140Q1015 155 1012 175L968 195Q1005 210 1005 225L962 252Q995 265 992 280L955 308Q990 315 988 330L948 372Q990 375 985 392L965 430M970 440Q1010 430 1010 470Q1040 435 1055 455L1063 480Q1080 445 1110 465',
      'M225 480L320 518L277 608L255 560C190 590 180 660 210 700C270 770 380 730 380 640Q378 610 352 580Q365 555 385 570C430 640 410 720 340 755C250 795 150 720 163 630C170 580 200 550 245 530Z',
      'M0 857L115 840Q140 842 145 870L165 1010Q165 1040 140 1045L0 1067M0 905L30 900Q50 910 35 925L0 935M0 978L20 972Q35 985 20 997L0 1003M0 1130L330 1088Q355 1090 360 1120L367 1190L422 1235L375 1252Q370 1285 340 1290L0 1337M0 1185L285 1152Q310 1165 290 1182L0 1218M0 1253L170 1232Q190 1245 170 1262L0 1285',
      'M510 940L770 988Q780 993 778 1002L750 1055Q745 1065 730 1060L645 1020L725 1085L685 1150Q675 1158 665 1150L505 960Q500 945 510 940Z',
      'M765 1385L840 1140Q855 1110 880 1117L1000 1160Q1025 1175 1018 1200L940 1385M887 1125L870 1165M920 1137L903 1178M955 1150L935 1192M990 1162L972 1208M810 1258C870 1255 930 1280 965 1318M780 1365Q840 1365 882 1385M430 1385L640 1288Q680 1275 682 1310L668 1385M105 1385Q130 1360 155 1385',
    ],
    dots: [
      [583, 22, 6], [637, 37, 6], [902, 452, 8.5], [843, 506, 7], [950, 519, 7.5],
      [475, 620, 9.5], [504, 697, 6.5], [607, 715, 12], [649, 803, 6.5], [874, 711, 7.5],
      [260, 881, 16], [382, 856, 10.5], [482, 842, 8.5], [575, 848, 11], [288, 990, 7], [382, 1007, 10.5],
      [497, 1077, 7.5], [562, 1170, 6.5], [751, 1187, 6.5], [514, 1248, 12],
    ],
  },
];

// bits that sit behind the last messages: [cx, cy, r]
const cornerDots: Dot[] = [
  [981, 2114, 20], [981, 2114, 8], [1197, 2111, 13], [1171, 2128, 9], [1062, 2155, 6],
  [1079, 2177, 8], [1149, 2180, 8], [1205, 1825, 13], [1220, 1780, 7], [1222, 1745, 7],
  [1191, 1931, 7], [1236, 2091, 6],
];

const Wallpaper = () => (
  <svg
    aria-hidden="true"
    viewBox="0 0 1241 2182"
    preserveAspectRatio="xMidYMin slice"
    className="absolute inset-0 h-full w-full fill-none stroke-[#2a2e35] stroke-3 [&_*]:[vector-effect:non-scaling-stroke]"
    strokeLinecap="round"
    strokeLinejoin="round"
  >
    {tiles.map((tile, i) => (
      <Tile key={i} {...tile} />
    ))}
    <Stamps d={STAR} items={stars} />
    <Stamps d={SPARK} items={sparks} />
    <Stamps d={HEART} items={hearts} />
    <Stamps d={NOTE} items={notes} />
    <g className="font-[Inter] font-bold">
      <text x="767" y="1649" fontSize="70">Hi</text>
      <text x="690" y="1824" fontSize="104" transform="rotate(-10 726 1784)">A</text>
      <text x="858" y="1913" fontSize="54" transform="rotate(-14 858 1913)">09:</text>
    </g>
    <text x="738" y="2089" fontSize="32" transform="rotate(-14 738 2089)" className="font-[Inter] font-thin stroke-2">W</text>
    <path d="M930 2100L939 2140Q943 2154 958 2150L1018 2138Q1034 2134 1032 2118L1028 2098M1190 2152L1196 2152L1241 2172M1190 2182L1197 2152M945 2182Q990 2145 1045 2182" />
    <path d="M1200 1868Q1200 1905 1222 1910L1241 1905M1241 1938C1200 1950 1208 2010 1236 2012M1228 2012L1206 2055Q1208 2066 1218 2060L1241 2015" />
    {cornerDots.map(([cx, cy, r]) => (
      <circle key={`${cx}-${r}`} cx={cx} cy={cy} r={r} />
    ))}
  </svg>
);

/* ---------- emoji and icons ---------- */

const EmojiDefs = () => (
  <svg aria-hidden="true" className="absolute h-0 w-0">
    <defs>
      <radialGradient id="face" cx="50%" cy="28%" r="75%">
        <stop offset="0" stopColor="#fff87c" />
        <stop offset="0.45" stopColor="#fddc51" />
        <stop offset="0.8" stopColor="#f5b43f" />
        <stop offset="1" stopColor="#e28a35" />
      </radialGradient>
      <linearGradient id="gloss" x1="0" y1="0" x2="0" y2="1">
        <stop offset="0" stopColor="#fffde8" stopOpacity="0.9" />
        <stop offset="1" stopColor="#fff66b" stopOpacity="0" />
      </linearGradient>
      <linearGradient id="shirt" x1="0" y1="0" x2="1" y2="0">
        <stop offset="0" stopColor="#4b80c0" />
        <stop offset="0.6" stopColor="#3a6cab" />
        <stop offset="1" stopColor="#244d85" />
      </linearGradient>
      <radialGradient id="heart" cx="50%" cy="45%" r="65%">
        <stop offset="0" stopColor="#f2543d" />
        <stop offset="0.7" stopColor="#e9432f" />
        <stop offset="1" stopColor="#b82a1e" />
      </radialGradient>
    </defs>
  </svg>
);

const SmileEmoji = () => (
  <svg viewBox="0 0 104 104" role="img" aria-label="🙂" className="h-[104px] w-[104px]">
    <circle cx="52" cy="52" r="52" fill="url(#face)" />
    <ellipse cx="52" cy="26" rx="38" ry="23" fill="url(#gloss)" />
    <ellipse cx="37" cy="42" rx="5.5" ry="8.5" fill="#8a5612" />
    <ellipse cx="67" cy="42" rx="5.5" ry="8.5" fill="#8a5612" />
    <path d="M31 68C43 81 61 81 73 68C65 74 58 75 52 75C46 75 39 74 31 68Z" fill="#613308" stroke="#613308" strokeWidth="1.5" strokeLinejoin="round" />
  </svg>
);

const ShrugEmoji = () => (
  <svg viewBox="0 0 114 104" role="img" aria-label="🤷🏻‍♂️" className="h-[104px] w-[114px]">
    <path d="M1 24C4 22 7 27 9 31L13 34L12 28C14 26 17 30 21 35C24 40 23 45 22 48H13C10 42 2 35 1 24Z" fill="#f3d3b7" />
    <path d="M113 30C109 27 103 30 99 34L98 36L99 31C96 31 93 36 90 41L89 48L100 49C105 44 112 38 113 30Z" fill="#f3d3b7" />
    <path d="M12 46L23 47L24 52L12 52ZM89 48L99 49L100 54L88 54Z" fill="#202f58" />
    <path d="M12 51H23V70L34 56C39 51 43 50 50 50H67C76 50 82 55 86 65L88 53L99 54V80C98 91 90 93 80 87V101C66 106 50 106 37 101L36 83C26 94 12 90 12 78Z" fill="url(#shirt)" />
    <path d="M38 63L36 82M79 62L80 86" stroke="#285086" strokeWidth="1.5" fill="none" />
    <path d="M34 30C33 15 40 8 56 8C70 8 77 16 75 32L74 43C71 56 63 61 55 61C44 61 38 53 36 42Z" fill="#f4dcc9" />
    <path d="M33 42C30 20 36 7 55 7C72 6 79 18 75 42C74 36 74 30 70 25C59 25 48 26 43 22C39 24 36 31 36 42Z" fill="#232224" />
    <path d="M40 16C48 8 61 8 69 15C60 12 50 12 40 16Z" fill="#66666a" />
    <path d="M41 30Q45 26 50 29M61 28Q65 25 69 28" stroke="#2a211e" strokeWidth="2" fill="none" />
    <circle cx="45" cy="36" r="3.6" fill="#2e1912" />
    <circle cx="64" cy="36" r="3.6" fill="#2e1912" />
    <circle cx="46" cy="35" r="1" fill="#fff" />
    <circle cx="65" cy="35" r="1" fill="#fff" />
    <path d="M53 45Q56 48 59 45" stroke="#d59f84" strokeWidth="2" fill="none" />
    <path d="M50 51C54 50 58 51 61 50C60 56 52 57 50 51Z" fill="#231112" />
  </svg>
);

const UneasyEmoji: React.FC<{ className: string }> = ({ className }) => (
  <svg viewBox="0 0 56 56" role="img" aria-label="🫤" className={className}>
    <circle cx="28" cy="28" r="28" fill="url(#face)" />
    <ellipse cx="28" cy="14" rx="20" ry="12" fill="url(#gloss)" />
    <ellipse cx="19" cy="22" rx="3.2" ry="5" fill="#8a5612" />
    <ellipse cx="37" cy="22" rx="3.2" ry="5" fill="#8a5612" />
    <path d="M16 42L41 34" stroke="#613308" strokeWidth="2.4" strokeLinecap="round" />
  </svg>
);

const Ticks = () => (
  <svg viewBox="0 0 46 31" role="img" aria-label="Read" className="h-[31px] w-[46px]" fill="none" stroke="#58a0f5" strokeWidth="4" strokeLinecap="round" strokeLinejoin="round">
    <path d="M2 20L10 28L30 3M21 25L24 28L44 3" />
  </svg>
);

const Tail: React.FC<{ mine: boolean }> = ({ mine }) => (
  <svg
    aria-hidden="true"
    viewBox="0 0 40 48"
    className={`absolute bottom-3.5 h-12 w-10 ${mine ? '-right-[26px] fill-[#225046]' : '-left-[26px] -scale-x-100 fill-[#363638]'}`}
  >
    <path d="M0 0H14C14 18 22 31 37 37C40 38 40 41 37 42C28 46 16 48 6 48H0Z" />
  </svg>
);

const StickerIcon = () => (
  <svg aria-hidden="true" viewBox="0 0 56 56" className="h-14 w-14" fill="none" stroke="#58a0f5" strokeWidth="4" strokeLinecap="round" strokeLinejoin="round">
    <path d="M31 53C37 52 41 49 45 45C50 40 54 36 54 29V21C54 8 48 2 36 2H19C7 2 2 8 2 20V35C2 48 8 54 20 54H24C27 54 29 54 31 53ZM31 53V46C31 36 35 32 44 32C49 32 53 32 53 29" />
  </svg>
);

const CameraIcon = () => (
  <svg aria-hidden="true" viewBox="0 0 66 58" className="h-[58px] w-[66px]" fill="none" stroke="#58a0f5" strokeWidth="4.5" strokeLinecap="round" strokeLinejoin="round">
    <path d="M21 6C23 3 25 3 28 3H38C41 3 43 3 45 6C48 9 49 9 53 9C60 10 63 14 63 21V43C63 52 60 55 51 55H15C6 55 3 52 3 43V21C3 14 6 10 13 9C17 9 18 9 21 6Z" />
    <circle cx="33" cy="30" r="13" />
  </svg>
);

const MicIcon = () => (
  <svg aria-hidden="true" viewBox="0 0 48 70" className="h-[70px] w-12" fill="none" stroke="#58a0f5" strokeWidth="4.5" strokeLinecap="round" strokeLinejoin="round">
    <rect x="13" y="3" width="22" height="44" rx="11" />
    <path d="M3 36C3 50 12 58 24 58C36 58 45 50 45 36M24 58V67" />
  </svg>
);

/* ---------- chat ---------- */

const QuoteBox: React.FC<{ quote: Quote }> = ({ quote }) => (
  <div className="overflow-hidden rounded-3xl bg-[#29292b]">
    <div className="border-l-12 border-[#e580fa] py-9 pr-5 pl-7">
      <p className="text-[42px] leading-[52px] font-semibold text-[#aa60b9]">{quote.author}</p>
      <p dir="rtl" className="mt-2 text-[38px] leading-[60px] text-[#adadb0]">
        {quote.text}
        {quote.emoji && <UneasyEmoji className="mr-2 inline-block h-[45px] w-[45px] align-middle opacity-80" />}
      </p>
    </div>
  </div>
);

const Bubble: React.FC<{ message: Message }> = ({ message }) => {
  const { mine, text, time, quote, tail, emoji, bigEmoji, reaction, width, spacing } = message;
  return (
    <li
      className={`relative rounded-[36px] shadow-[0_2px_2px_rgba(0,0,0,0.3)] ${width} ${spacing} ${
        mine ? 'self-end bg-[#225046]' : 'self-start bg-[#363638]'
      } ${quote ? 'pt-3' : ''}`}
    >
      {tail && <Tail mine={mine} />}
      {quote && (
        <div className="px-3">
          <QuoteBox quote={quote} />
        </div>
      )}
      <div className={`relative flex flex-col px-8 pb-[17px] ${quote ? 'gap-6 pt-5' : 'gap-5 pt-6'}`}>
        {bigEmoji ? (
          <div className="flex justify-center gap-5">
            <ShrugEmoji />
            <SmileEmoji />
          </div>
        ) : (
          <p dir="rtl" className="flex items-center gap-2 text-[50px] leading-[56px] text-white">
            {text}
            {emoji && <UneasyEmoji className="my-0.5 h-14 w-14" />}
          </p>
        )}
        <div
          className={`flex items-center justify-end gap-3 text-[36px] leading-[44px] tabular-nums ${
            mine ? 'text-[#84a39b]' : 'text-[#9b9ba0]'
          }`}
        >
          <time>{time}</time>
          {mine && <Ticks />}
        </div>
      </div>
      {reaction && (
        <button
          type="button"
          aria-label="Reaction"
          className="absolute right-8 -bottom-[65px] flex h-[76px] w-[104px] items-center justify-center rounded-full bg-[#363638] ring-3 ring-[#162123]"
        >
          <svg viewBox="0 0 50 48" role="img" aria-label="❤️" className="h-12 w-[50px]">
            <path d="M25 48C18 39 0 28 0 14C0 -1 20 -5 25 9C30 -5 50 -1 50 14C50 28 32 39 25 48Z" fill="url(#heart)" />
            <path d="M4 12C4 1 19 -1 22 9C16 5 9 6 4 12ZM28 9C31 -1 46 1 46 12C41 6 34 5 28 9Z" fill="#ffc7bf" opacity="0.75" />
          </svg>
        </button>
      )}
    </li>
  );
};

const App: React.FC = () => {
  const [draft, setDraft] = useState('');

  return (
    <div className="flex min-h-screen flex-col bg-[#161616] font-[Inter,'Noto_Sans_Arabic','DejaVu_Sans',sans-serif]">
      <EmojiDefs />
      <main className="relative flex-1 overflow-hidden border-t-3 border-[#323235] bg-[#191d24]">
        <Wallpaper />
        <ol className="relative flex flex-col pr-12 pb-[86px] pl-[47px]">
          <li className="relative flex w-[336px] items-center justify-end gap-3 self-end rounded-b-[36px] bg-[#225046] px-8 pt-1 pb-[17px] text-[36px] leading-[44px] text-[#84a39b] tabular-nums shadow-[0_2px_2px_rgba(0,0,0,0.3)]">
            <Tail mine />
            <time className="relative">01:20</time>
            <Ticks />
          </li>
          {messages.map((message) => (
            <Bubble key={message.id} message={message} />
          ))}
        </ol>
      </main>

      <footer className="border-t-2 border-[#303033] bg-[#161616] pt-5 pb-6">
        <div className="flex items-center pr-13 pl-10">
          <button type="button" aria-label="Attach" className="mr-10 shrink-0">
            <svg aria-hidden="true" viewBox="0 0 60 60" className="h-15 w-15" stroke="#58a0f5" strokeWidth="5" strokeLinecap="round">
              <path d="M30 3V57M3 30H57" />
            </svg>
          </button>
          <div className="flex h-[99px] min-w-0 flex-1 items-center rounded-full border border-[#48484b] bg-[#2c2c2e] pr-[34px] pl-10">
            <input
              type="text"
              aria-label="Message"
              value={draft}
              onChange={(e) => setDraft(e.target.value)}
              className="min-w-0 flex-1 bg-transparent text-[46px] text-white focus:outline-none"
            />
            <button type="button" aria-label="Stickers" className="shrink-0">
              <StickerIcon />
            </button>
          </div>
          <button type="button" aria-label="Camera" className="ml-14 shrink-0">
            <CameraIcon />
          </button>
          <button type="button" aria-label="Record voice message" className="ml-15 shrink-0">
            <MicIcon />
          </button>
        </div>
        <div className="mx-auto mt-[84px] h-[15px] w-[36%] rounded-full bg-white" />
      </footer>
    </div>
  );
};

export default App;
